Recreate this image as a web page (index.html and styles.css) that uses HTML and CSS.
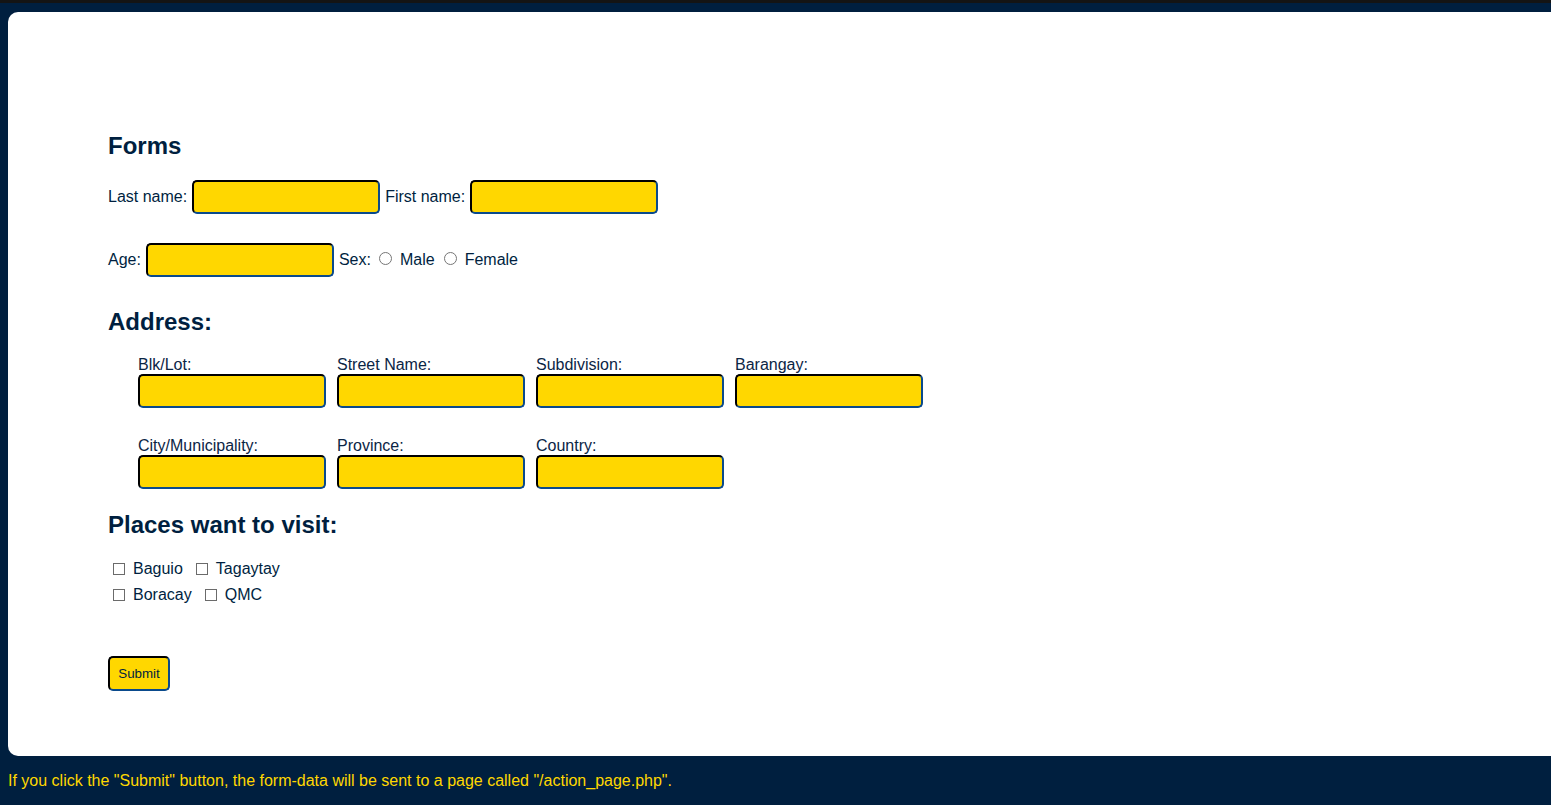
FILE: index.html
```html
<!DOCTYPE html>
<html lang="en">
<head>
<meta charset="utf-8">
<title>Forms</title>
<link rel="stylesheet" href="styles.css">
</head>
<body>
<div class="topbar"></div>
<main class="card">
  <form class="form" action="/action_page.php">
    <h2 class="heading">Forms</h2>
    <div class="row row-name">
      <label class="lbl" for="lname">Last name:</label>
      <input class="field" type="text" id="lname" name="lname">
      <label class="lbl" for="fname">First name:</label>
      <input class="field" type="text" id="fname" name="fname">
    </div>
    <div class="row row-age">
      <label class="lbl" for="age">Age:</label>
      <input class="field" type="text" id="age" name="age">
      <span class="lbl sex">Sex:</span>
      <input class="radio" type="radio" id="male" name="sex" value="male">
      <label class="opt" for="male">Male</label>
      <input class="radio" type="radio" id="female" name="sex" value="female">
      <label class="opt" for="female">Female</label>
    </div>

    <h2 class="heading heading-address">Address:</h2>
    <div class="address">
      <div class="cell"><label class="alabel" for="blk">Blk/Lot:</label><input class="field" type="text" id="blk"></div>
      <div class="cell"><label class="alabel" for="street">Street Name:</label><input class="field" type="text" id="street"></div>
      <div class="cell"><label class="alabel" for="subd">Subdivision:</label><input class="field" type="text" id="subd"></div>
      <div class="cell"><label class="alabel" for="brgy">Barangay:</label><input class="field" type="text" id="brgy"></div>
      <div class="cell"><label class="alabel" for="city">City/Municipality:</label><input class="field" type="text" id="city"></div>
      <div class="cell"><label class="alabel" for="prov">Province:</label><input class="field" type="text" id="prov"></div>
      <div class="cell"><label class="alabel" for="country">Country:</label><input class="field" type="text" id="country"></div>
    </div>

    <h2 class="heading heading-places">Places want to visit:</h2>
    <div class="places">
      <div class="prow">
        <input class="check" type="checkbox" id="baguio"><label class="opt" for="baguio">Baguio</label>
        <input class="check" type="checkbox" id="tagaytay"><label class="opt" for="tagaytay">Tagaytay</label>
      </div>
      <div class="prow">
        <input class="check" type="checkbox" id="boracay"><label class="opt" for="boracay">Boracay</label>
        <input class="check" type="checkbox" id="qmc"><label class="opt" for="qmc">QMC</label>
      </div>
    </div>

    <div class="actions">
      <button class="submit" type="submit">Submit</button>
    </div>
  </form>
</main>
<p class="note">If you click the "Submit" button, the form-data will be sent to a page called "/action_page.php".</p>
</body>
</html>
```
FILE: styles.css
```css
html, body {
  margin: 0;
  padding: 0;
  overflow: hidden;
}

body {
  background: #001f3f;
  font-family: "Liberation Sans", Arial, sans-serif;
  font-size: 16px;
  color: #001f3f;
}

.topbar {
  height: 3px;
  background: #141414;
}

.card {
  margin: 9px 0 0 8px;
  background: #ffffff;
  border-radius: 10px 0 0 10px;
  padding: 120px 0 65px 100px;
}

.form {
  display: flex;
  flex-direction: column;
  align-items: flex-start;
}

.heading {
  margin: 0;
  font-size: 24px;
  line-height: 28px;
  font-weight: bold;
  color: #001f3f;
}

.row {
  display: flex;
  align-items: center;
  height: 34px;
}

.row-name {
  margin-top: 20px;
}

.row-age {
  margin-top: 29px;
}

.lbl {
  line-height: 18px;
  margin-right: 5px;
}

.row .field + .lbl {
  margin-left: 5px;
}

.row .sex {
  margin-left: 6px;
  margin-right: 8px;
}

.field {
  box-sizing: border-box;
  width: 188px;
  height: 34px;
  margin: 0;
  padding: 2px 6px;
  background: #ffd700;
  border: 2px solid;
  border-color: #000000 #0a4a8c #0a4a8c #000000;
  border-radius: 5px;
  font-family: inherit;
  font-size: 16px;
  color: #001f3f;
  outline: none;
}

.radio {
  width: 13px;
  height: 13px;
  margin: 0 8px 3px 0;
  accent-color: #767676;
}

.opt {
  line-height: 18px;
  margin-right: 9px;
}

.heading-address {
  margin-top: 31px;
}

.address {
  margin-top: 20px;
  padding-left: 30px;
  display: grid;
  grid-template-columns: repeat(4, 188px);
  column-gap: 11px;
  row-gap: 29px;
}

.cell {
  display: flex;
  flex-direction: column;
}

.alabel {
  line-height: 18px;
  margin-bottom: 0;
  color: #0b2545;
}

.heading-places {
  margin-top: 22px;
}

.places {
  margin-top: 17px;
  display: flex;
  flex-direction: column;
}

.prow {
  display: flex;
  align-items: center;
  height: 26px;
}

.check {
  appearance: none;
  -webkit-appearance: none;
  box-sizing: border-box;
  width: 12px;
  height: 12px;
  margin: 0 8px 1px 5px;
  border: 1px solid #6b6b6b;
  border-radius: 0;
  background: #ffffff;
}

.prow .opt {
  margin-right: 8px;
}

.actions {
  margin-top: 48px;
}

.submit {
  box-sizing: border-box;
  width: 62px;
  height: 35px;
  padding: 0;
  background: #ffd700;
  border: 2px solid;
  border-color: #000000 #0a4a8c #0a4a8c #000000;
  border-radius: 5px;
  font-family: inherit;
  font-size: 13.33px;
  color: #001f3f;
  cursor: pointer;
}

.note {
  margin: 16px 0 0 8px;
  line-height: 18px;
  color: #ffd700;
}
```
